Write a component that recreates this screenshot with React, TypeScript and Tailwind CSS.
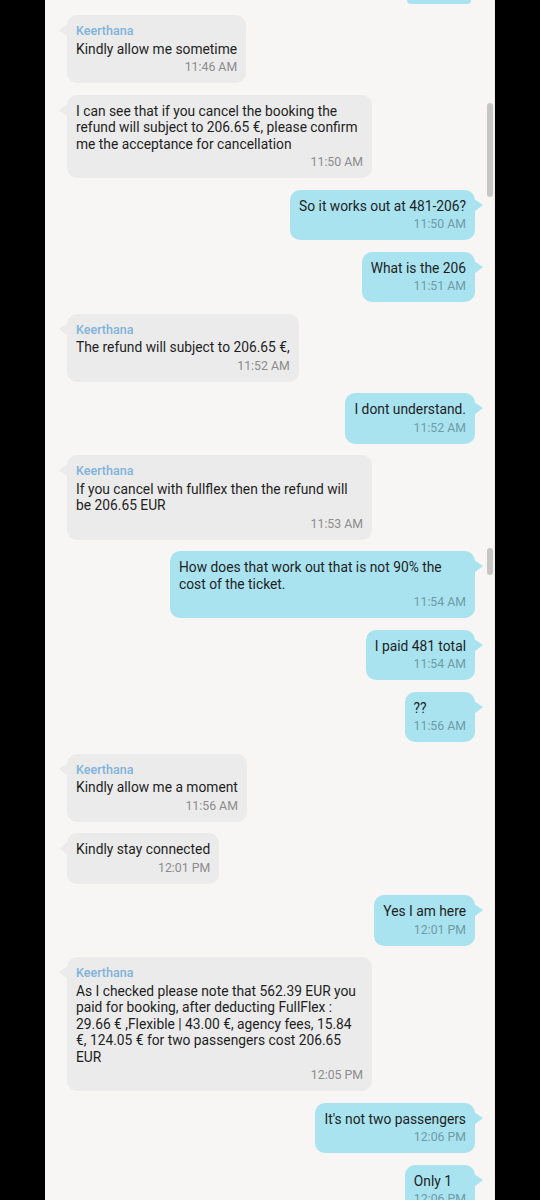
import React from "react";

type Msg = {
    me?: boolean;
    name?: string;
    lines: string[];
    time: string;
};

const messages: Msg[] = [
    { name: "Keerthana", lines: ["Kindly allow me sometime"], time: "11:46 AM" },
    {
        lines: [
            "I can see that if you cancel the booking the",
            "refund will subject to 206.65 €, please confirm",
            "me the acceptance for cancellation",
        ],
        time: "11:50 AM",
    },
    { me: true, lines: ["So it works out at 481-206?"], time: "11:50 AM" },
    { me: true, lines: ["What is the 206"], time: "11:51 AM" },
    { name: "Keerthana", lines: ["The refund will subject to 206.65 €,"], time: "11:52 AM" },
    { me: true, lines: ["I dont understand."], time: "11:52 AM" },
    {
        name: "Keerthana",
        lines: ["If you cancel with fullflex then the refund will", "be 206.65 EUR"],
        time: "11:53 AM",
    },
    {
        me: true,
        lines: ["How does that work out that is not 90% the", "cost of the ticket."],
        time: "11:54 AM",
    },
    { me: true, lines: ["I paid 481 total"], time: "11:54 AM" },
    { me: true, lines: ["??"], time: "11:56 AM" },
    { name: "Keerthana", lines: ["Kindly allow me a moment"], time: "11:56 AM" },
    { lines: ["Kindly stay connected"], time: "12:01 PM" },
    { me: true, lines: ["Yes I am here"], time: "12:01 PM" },
    {
        name: "Keerthana",
        lines: [
            "As I checked please note that 562.39 EUR you",
            "paid for booking, after deducting FullFlex :",
            "29.66 € ,Flexible | 43.00 €, agency fees, 15.84",
            "€, 124.05 € for two passengers cost 206.65",
            "EUR",
        ],
        time: "12:05 PM",
    },
    { me: true, lines: ["It's not two passengers"], time: "12:06 PM" },
    { me: true, lines: ["Only 1"], time: "12:06 PM" },
];

const Bubble = ({ msg }: { msg: Msg }) => {
    const { me, name, lines, time } = msg;
    const multi = lines.length > 1;

    return (
        <div className={me ? "flex justify-end pr-[19px]" : "flex justify-start pl-[22px]"}>
            <div
                className={`relative rounded-[10px] px-[9px] pt-[8px] pb-[8px] ${
                    me ? "bg-[#a9e3f0]" : "bg-[#ebebeb]"
                } ${multi ? "w-[305px]" : "w-fit"}`}
            >
                {/* tail */}
                <svg
                    width="10"
                    height="14"
                    viewBox="0 0 10 14"
                    className={`absolute top-[9px] ${me ? "right-[-9px]" : "left-[-9px]"}`}
                >
                    {me ? (
                        <path d="M0 0 L9 6 L0 13 Z" fill="#a9e3f0" />
                    ) : (
                        <path d="M10 0 L1 6 L10 13 Z" fill="#ebebeb" />
                    )}
                </svg>

                {name && (
                    <div className="text-[12.5px] leading-[15px] font-medium text-[#7fb2dc] mb-[2.5px]">
                        {name}
                    </div>
                )}
                <div className="text-[13.8px] leading-[16.5px] text-[#1e1e1e]">
                    {lines.map((l, i) => (
                        <div key={i} className="whitespace-nowrap">
                            {l}
                        </div>
                    ))}
                </div>
                <div
                    className={`mt-[2px] text-right text-[12.3px] leading-[16px] ${
                        me ? "text-[#6f9ba6]" : "text-[#8c8c8c]"
                    }`}
                >
                    {time}
                </div>
            </div>
        </div>
    );
};

export default function App() {
    return (
        <div
            className="w-[540px] h-[1200px] bg-black flex overflow-hidden"
            style={{ fontFamily: "Roboto, 'Noto Sans', sans-serif" }}
        >
            <div className="relative ml-[45px] w-[450px] h-full bg-[#f7f6f5] border-r border-[#ececec] overflow-hidden">
                {/* scroll thumbs */}
                <div className="absolute left-[442px] top-[103px] w-[6px] h-[94px] rounded-full bg-[#c6c6c6]" />
                <div className="absolute left-[442px] top-[548px] w-[6px] h-[27px] rounded-full bg-[#c6c6c6]" />

                <div className="flex flex-col gap-[11.5px]">
                    {/* tail end of previous outgoing bubble */}
                    <div className="flex justify-end pr-[23px]">
                        <div className="w-[64px] h-[3.5px] rounded-b-[10px] bg-[#a9e3f0]" />
                    </div>
                    {messages.map((m, i) => (
                        <Bubble key={i} msg={m} />
                    ))}
                </div>
            </div>
        </div>
    );
}
